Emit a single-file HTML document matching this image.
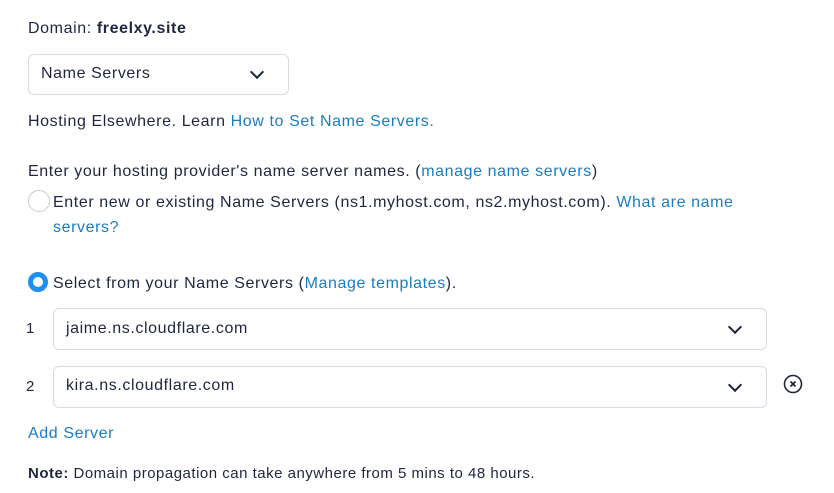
<!DOCTYPE html><html><head><style>
body{margin:0;width:834px;height:493px;background:#fff;font-family:"Liberation Sans",sans-serif;color:#1f2640;font-size:16px;letter-spacing:0.6px;position:relative;overflow:hidden}
.a{position:absolute;white-space:nowrap}
a{color:#1a7dc0;text-decoration:none}
.box{position:absolute;border:1px solid #d5dbe3;border-radius:6px;background:#fff}
.chev{position:absolute;width:8px;height:8px;border-right:2px solid #1f2640;border-bottom:2px solid #1f2640;transform:rotate(45deg)}
</style></head><body>
<div class="a" style="left:28px;top:20px">Domain: <b>freelxy.site</b></div>
<div class="box" style="left:28px;top:54px;width:259px;height:39px"></div>
<div class="a" style="left:41px;top:65px">Name Servers</div>
<div class="chev" style="left:252px;top:67px"></div>
<div class="a" style="left:28px;top:113px">Hosting Elsewhere. Learn <a>How to Set Name Servers.</a></div>
<div class="a" style="left:28px;top:163px">Enter your hosting provider's name server names. (<a>manage name servers</a>)</div>
<div style="position:absolute;left:28px;top:190px;width:20px;height:20px;border:1px solid #c5cad6;border-radius:50%"></div>
<div class="a" style="left:53px;top:194px">Enter new or existing Name Servers (ns1.myhost.com, ns2.myhost.com). <a>What are name</a></div>
<div class="a" style="left:53px;top:219px"><a>servers?</a></div>
<div style="position:absolute;left:28px;top:272px;width:10px;height:10px;border:5px solid #1e90f0;border-radius:50%;background:#fff"></div>
<div class="a" style="left:53px;top:275px">Select from your Name Servers (<a>Manage templates</a>).</div>
<div class="a" style="left:26px;top:320px;font-size:15px">1</div>
<div class="box" style="left:53px;top:308px;width:712px;height:40px"></div>
<div class="a" style="left:66px;top:320px">jaime.ns.cloudflare.com</div>
<div class="chev" style="left:730px;top:322px"></div>
<div class="a" style="left:26px;top:378px;font-size:15px">2</div>
<div class="box" style="left:53px;top:366px;width:712px;height:40px"></div>
<div class="a" style="left:66px;top:377px">kira.ns.cloudflare.com</div>
<div class="chev" style="left:730px;top:380px"></div>
<svg style="position:absolute;left:783px;top:374px" width="20" height="20" viewBox="0 0 20 20"><circle cx="10" cy="10" r="8.5" fill="none" stroke="#1f2640" stroke-width="1.6"/><path d="M7.5 7.5L12.5 12.5M12.5 7.5L7.5 12.5" stroke="#1f2640" stroke-width="1.8"/></svg>
<div class="a" style="left:28px;top:425px"><a>Add Server</a></div>
<div class="a" style="left:28px;top:465px;font-size:15px;letter-spacing:0.5px"><b>Note:</b> Domain propagation can take anywhere from 5 mins to 48 hours.</div>
</body></html>
